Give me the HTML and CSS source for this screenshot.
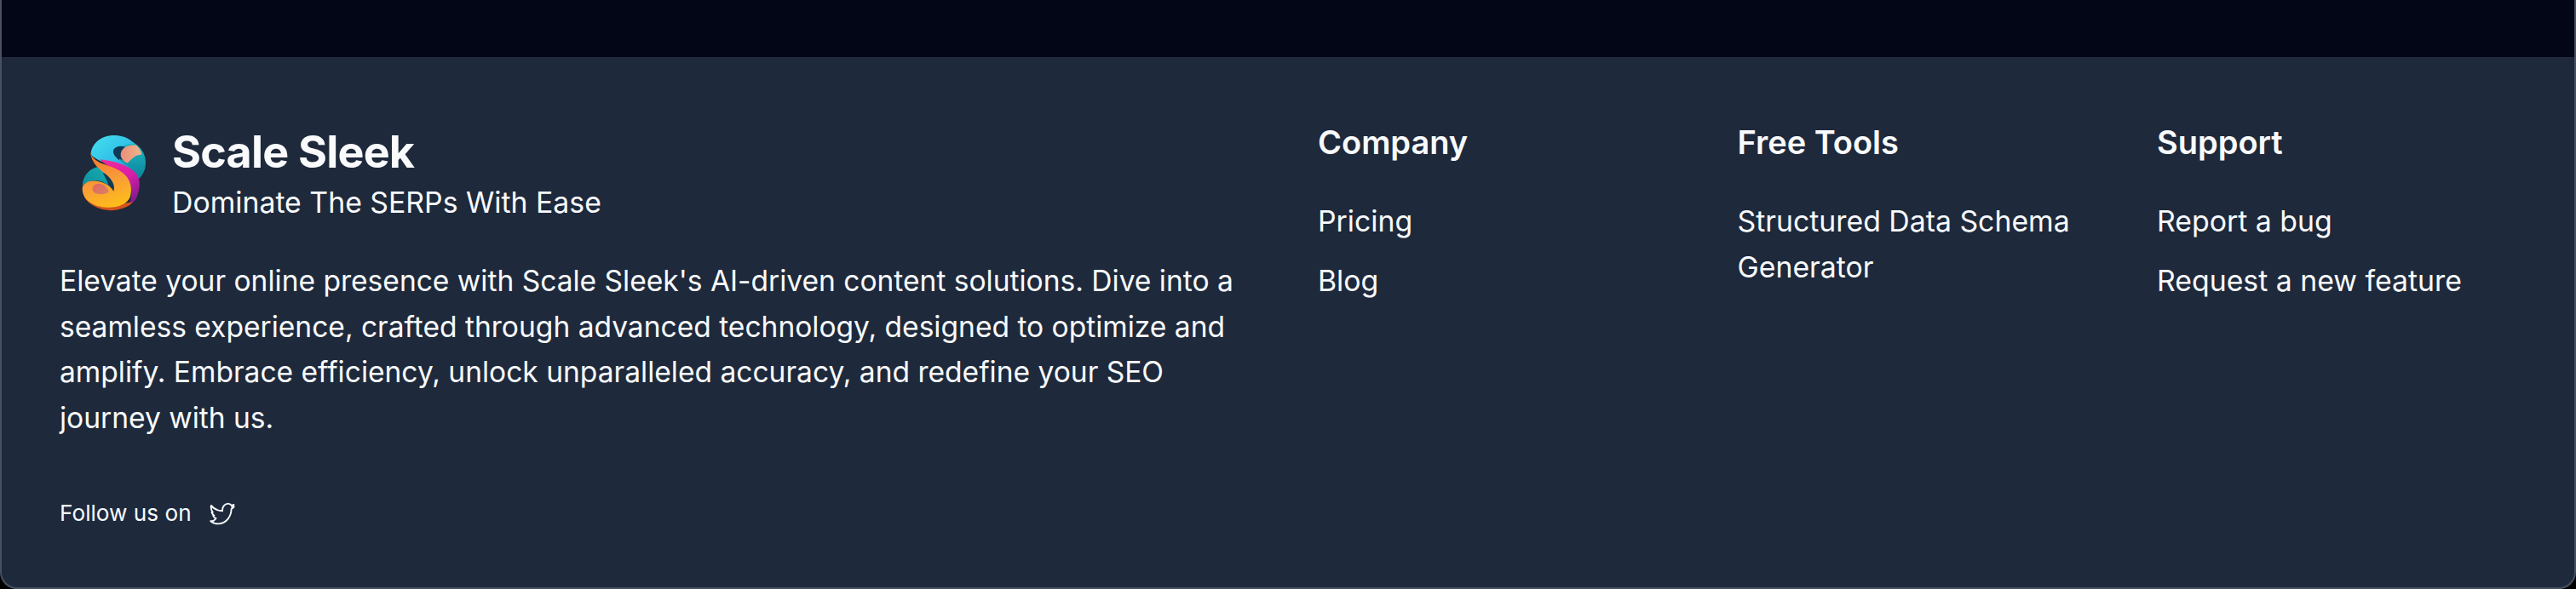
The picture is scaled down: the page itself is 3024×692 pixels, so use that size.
FILE: index.html
```html
<!DOCTYPE html>
<html lang="en">
<head>
<meta charset="utf-8">
<title>Scale Sleek</title>
<link rel="stylesheet" href="styles.css">
</head>
<body>
<div class="frame">
  <div class="band"></div>
  <footer class="footer">
    <section class="about">
      <div class="brand">
        <svg class="logo" viewBox="18 24 228 270" aria-hidden="true">
          <defs>
            <linearGradient id="cy" x1="0" y1="0" x2="1" y2="1"><stop offset="0" stop-color="#45e0ee"/><stop offset="0.6" stop-color="#30bfe8"/><stop offset="1" stop-color="#1c86c8"/></linearGradient>
            <linearGradient id="tr" x1="0" y1="0" x2="0" y2="1"><stop offset="0" stop-color="#22c0c8"/><stop offset="1" stop-color="#0c7f98"/></linearGradient>
            <linearGradient id="tl" x1="1" y1="0" x2="0" y2="1"><stop offset="0" stop-color="#17b0b4"/><stop offset="1" stop-color="#0d8c9c"/></linearGradient>
            <linearGradient id="mg" x1="0" y1="0" x2="0.6" y2="1"><stop offset="0" stop-color="#f52c98"/><stop offset="0.6" stop-color="#d81ea8"/><stop offset="1" stop-color="#8c1a8e"/></linearGradient>
            <linearGradient id="or" x1="0.2" y1="0" x2="0.5" y2="1"><stop offset="0" stop-color="#f2752c"/><stop offset="0.55" stop-color="#f99b38"/><stop offset="1" stop-color="#fdbb1c"/></linearGradient>
            <linearGradient id="pc" x1="0" y1="0" x2="1" y2="0"><stop offset="0" stop-color="#e88f78"/><stop offset="1" stop-color="#f3b48e"/></linearGradient>
            <linearGradient id="rd" x1="0" y1="0" x2="1" y2="1"><stop offset="0" stop-color="#e2665c"/><stop offset="1" stop-color="#d9826a"/></linearGradient>
          </defs>
          <path fill="url(#tr)" d="M150 40C210 40 245 85 243 125C242 155 228 175 212 185L150 120Z"/>
          <path fill="url(#cy)" d="M50 92C53 50 95 25 135 27C165 28 190 40 205 58C180 55 165 62 160 68C140 62 125 75 130 90C135 110 170 125 205 155L150 140L85 118C70 110 55 104 50 92Z"/>
          <path fill="#0e3a56" d="M130 85C130 68 155 60 170 68C160 80 155 100 165 115C150 112 130 100 130 85Z"/>
          <path fill="url(#pc)" d="M155 95C155 70 185 58 210 62C222 72 230 90 228 95C205 95 195 110 178 125C165 118 155 108 155 95Z"/>
          <path fill="url(#tl)" d="M80 138C50 140 22 165 20 205C30 195 50 185 70 187C95 187 115 205 125 220L135 190C120 165 100 145 80 138Z"/>
          <path fill="#0e3a56" d="M92 158C110 165 132 185 134 215C125 225 118 215 112 205C108 185 100 175 92 158Z"/>
          <path fill="url(#mg)" d="M82 112C125 116 180 130 208 160C226 180 224 215 212 245C206 258 196 266 186 272C196 240 196 205 178 178C155 150 105 140 82 112Z"/>
          <path fill="#d4521c" d="M25 240C40 275 90 295 130 291C165 288 190 275 197 262L140 270L60 260Z"/>
          <path fill="url(#or)" d="M48 85C50 100 60 112 80 122C105 134 148 142 170 166C193 190 196 220 188 245C178 268 145 283 105 281C60 279 20 255 20 215C20 195 45 185 70 188C95 190 120 205 130 224C136 205 128 188 108 168C85 150 52 130 48 85Z"/>
          <path fill="url(#rd)" d="M56 212C60 197 82 192 98 204C108 212 114 222 112 227C102 236 76 236 64 230C57 225 54 218 56 212Z"/>
        </svg>
        <div class="brand-text">
          <div class="brand-name">Scale Sleek</div>
          <div class="brand-tag">Dominate The SERPs With Ease</div>
        </div>
      </div>
      <p class="blurb">Elevate your online presence with Scale Sleek's AI-driven content solutions. Dive into a seamless experience, crafted through advanced technology, designed to optimize and amplify. Embrace efficiency, unlock unparalleled accuracy, and redefine your SEO journey with us.</p>
      <div class="follow">
        <span>Follow us on</span>
        <svg class="bird" viewBox="14 10 95 85" aria-hidden="true"><path d="M18 80C34 82 30 76 38 70C32 67 28 64 27 60C29 60 30 60 31 59C26 56 22 52 22 47C24 47 25 48 26 47C20 40 18 32 20 22C30 35 45 42 62 42C60 28 70 16 82 15C88 15 93 18 96 22L104 19C102 24 100 26 97 28L105 26C102 30 99 33 95 35C95 60 78 90 46 90C36 90 26 87 18 80Z"/></svg>
      </div>
    </section>
    <nav class="col">
      <h3>Company</h3>
      <ul><li>Pricing</li><li>Blog</li></ul>
    </nav>
    <nav class="col">
      <h3>Free Tools</h3>
      <ul><li>Structured Data Schema Generator</li></ul>
    </nav>
    <nav class="col">
      <h3>Support</h3>
      <ul><li>Report a bug</li><li>Request a new feature</li></ul>
    </nav>
  </footer>
</div>
</body>
</html>
```
FILE: styles.css
```css
* { box-sizing: border-box; }
html, body { margin: 0; padding: 0; background: #000; }
body { width: 3024px; height: 692px; overflow: hidden; font-family: Inter, "Liberation Sans", sans-serif; color: #f8fafc; }
.frame { height: 692px; border: 2px solid #475163; border-top: 0; border-radius: 0 0 20px 20px; overflow: hidden; background: #1e293b; display: flex; flex-direction: column; }
.band { height: 67px; flex: none; background: #020617; }
.footer { flex: 1; display: grid; grid-template-columns: 1477px repeat(3, 492.5px); padding: 0 0 0 68px; }
.about { padding-top: 77px; width: 1400px; }
.brand { display: flex; align-items: center; gap: 30px; padding-left: 26px; }
.logo { width: 76px; height: 90px; flex: none; }
.brand-name { font-size: 52px; font-weight: 700; line-height: 70px; letter-spacing: -0.8px; }
.brand-tag { font-size: 33.8px; line-height: 48px; }
.blurb { margin: 41px 0 0; font-size: 33.6px; line-height: 53.6px; letter-spacing: -0.02px; }
.follow { margin-top: 66px; display: flex; align-items: center; gap: 21px; font-size: 26.2px; line-height: 40px; }
.bird { width: 30px; height: 27px; fill: none; stroke: #f8fafc; stroke-width: 6; stroke-linecap: round; stroke-linejoin: round; }
.col { padding-top: 76px; }
.col h3 { margin: 0 0 42px; font-size: 38px; font-weight: 600; line-height: 48px; }
.col ul { list-style: none; margin: 0; padding: 0; width: 430px; display: flex; flex-direction: column; gap: 16px; font-size: 33.8px; line-height: 54px; }
```
